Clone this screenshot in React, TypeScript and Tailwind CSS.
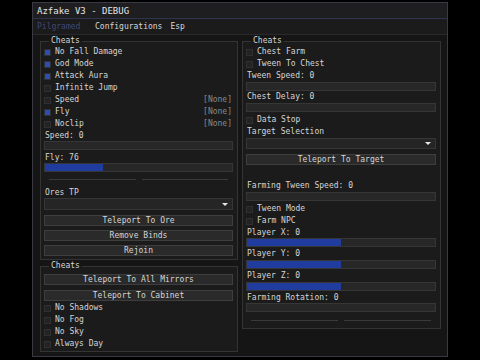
import React from "react";

function Check({ label, on, bind }: { label: string; on?: boolean; bind?: boolean }) {
  return (
    <div className="flex items-center h-[12px]">
      <div className="w-[7px] h-[7px] border border-[#303030] bg-[#232323] flex items-center justify-center">
        {on && <div className="w-[5px] h-[5px] bg-[#2d4db0]" />}
      </div>
      <span className="ml-[4px]">{label}</span>
      {bind && <span className="ml-auto mr-[1px] text-[#8a8a8a]">[None]</span>}
    </div>
  );
}

function Label({ text, h = "h-[12px]", cls = "" }: { text: string; h?: string; cls?: string }) {
  return <div className={`flex items-center pl-[1px] ${h} ${cls}`}>{text}</div>;
}

function Slider({ fill = 0, cls = "" }: { fill?: number; cls?: string }) {
  return (
    <div className={`h-[9px] border border-[#363636] bg-[#272727] ${cls}`}>
      {fill > 0 && <div className="h-full bg-[#1f3c9e]" style={{ width: `${fill}%` }} />}
    </div>
  );
}

function Btn({ text, cls = "" }: { text: string; cls?: string }) {
  return (
    <div className={`h-[11px] border border-[#3e3e3e] bg-[#2a2a2a] flex items-center justify-center ${cls}`}>
      {text}
    </div>
  );
}

function Combo({ h = "h-[12px]" }: { h?: string }) {
  return (
    <div className={`${h} border border-[#363636] bg-[#252525] flex items-center justify-end pr-[4px]`}>
      <div className="w-0 h-0 border-l-[3px] border-r-[3px] border-t-[3px] border-l-transparent border-r-transparent border-t-[#e8e8e8]" />
    </div>
  );
}

function Sep({ cls = "" }: { cls?: string }) {
  return (
    <div className={`flex gap-[6px] ${cls}`}>
      <div className="h-px flex-1 bg-[#3a3a3a]" />
      <div className="h-px flex-1 bg-[#3a3a3a]" />
    </div>
  );
}

function Group({ children, w }: { children: React.ReactNode; w: string }) {
  return (
    <fieldset className={`${w} border border-[#343434] bg-[#1b1b1b] pl-[3px] pr-[4px]`}>
      <legend className="ml-[5px] px-[2px] leading-[8px] h-[8px]">Cheats</legend>
      {children}
    </fieldset>
  );
}

export default function App() {
  return (
    <div className="w-[480px] h-[360px] bg-black flex justify-center font-['DejaVu_Sans_Mono',monospace] text-[8px] leading-[8px] text-[#d6d6d6]">
      <div className="mt-[2px] w-[416px] h-[355px] border border-[#3a3a42] bg-[#151515] flex flex-col">
        <div className="h-[16px] bg-[#1e1e21] flex items-center pl-[4px] text-[9px] text-[#e4e4e4] border-b border-[#2d3452]">
          Azfake V3 - DEBUG
        </div>
        <div className="h-[16px] bg-[#1b1b1c] flex items-center pl-[4px] gap-[8px] border-b border-[#2a2a2e]">
          <span className="w-[50px] text-[#3e4b78] blur-[0.4px]">Pilgramed</span>
          <span>Configurations</span>
          <span>Esp</span>
        </div>
        <div className="flex pl-[7px] pt-[2px] gap-[4px]">
          <div className="flex flex-col gap-[2px]">
            <Group w="w-[198px]">
              <div className="pt-[1px]">
                <Check label="No Fall Damage" on />
                <Check label="God Mode" on />
                <Check label="Attack Aura" on />
                <Check label="Infinite Jump" />
                <Check label="Speed" bind />
                <Check label="Fly" on bind />
                <Check label="Noclip" bind />
                <Label text="Speed: 0" h="h-[11px]" />
                <Slider />
                <Label text="Fly: 76" h="h-[11px]" cls="mt-[2px]" />
                <Slider fill={31} />
                <Sep cls="mt-[7px] mx-[5px]" />
                <Label text="Ores TP" h="h-[11px]" cls="mt-[7px]" />
                <Combo />
                <Btn text="Teleport To Ore" cls="mt-[5px]" />
                <Btn text="Remove Binds" cls="mt-[4px]" />
                <Btn text="Rejoin" cls="mt-[4px]" />
                <div className="h-[3px]" />
              </div>
            </Group>
            <Group w="w-[198px]">
              <Btn text="Teleport To All Mirrors" cls="mt-[4px]" />
              <Btn text="Teleport To Cabinet" cls="mt-[5px]" />
              <div className="mt-[1px]">
                <Check label="No Shadows" />
                <Check label="No Fog" />
                <Check label="No Sky" />
                <Check label="Always Day" />
              </div>
              <div className="h-[1px]" />
            </Group>
          </div>
          <div>
            <Group w="w-[199px]">
              <div className="pt-[1px]">
                <Check label="Chest Farm" />
                <Check label="Tween To Chest" />
                <Label text="Tween Speed: 0" />
                <Slider />
                <Label text="Chest Delay: 0" />
                <Slider />
                <div className="mt-[2px]">
                  <Check label="Data Stop" />
                </div>
                <Label text="Target Selection" />
                <Combo h="h-[11px]" />
                <Btn text="Teleport To Target" cls="mt-[5px]" />
                <Label text="Farming Tween Speed: 0" cls="mt-[15px]" />
                <Slider />
                <div className="mt-[2px]">
                  <Check label="Tween Mode" />
                  <Check label="Farm NPC" />
                </div>
                <Label text="Player X: 0" h="h-[11px]" />
                <Slider fill={50} />
                <Label text="Player Y: 0" cls="mt-[1px]" />
                <Slider fill={50} />
                <Label text="Player Z: 0" cls="mt-[1px]" />
                <Slider fill={50} />
                <Label text="Farming Rotation: 0" h="h-[11px]" cls="mt-[1px]" />
                <Slider />
                <Sep cls="mt-[8px] mx-[5px]" />
                <div className="h-[7px]" />
              </div>
            </Group>
          </div>
        </div>
      </div>
    </div>
  );
}
